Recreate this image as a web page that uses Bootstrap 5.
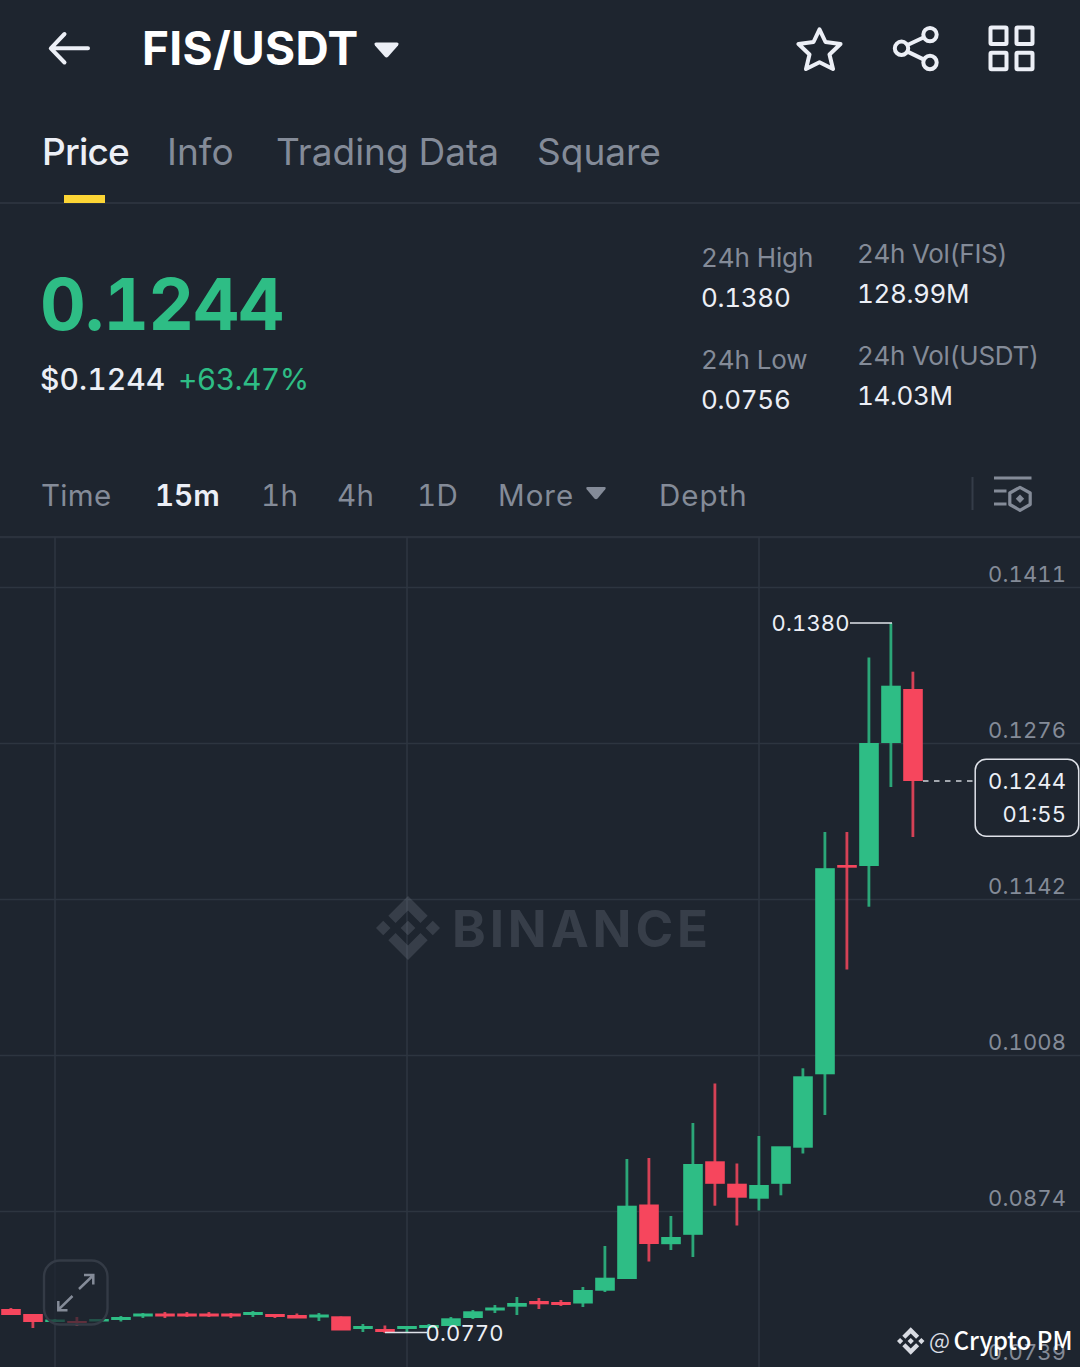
<!DOCTYPE html>
<html lang="en">
<head>
<meta charset="utf-8">
<meta name="viewport" content="width=device-width, initial-scale=1">
<title>FIS/USDT</title>
<link href="https://cdn.jsdelivr.net/npm/bootstrap@5.3.0/dist/css/bootstrap.min.css" rel="stylesheet">
<style>
:root{--ink:#eceff6;--dim:#848b98;--up:#2ebd85;--down:#f6465d;--line:#2b323d;--bg:#1e252f}
body{background:var(--bg);color:var(--ink);font-family:Inter,sans-serif;font-variant-numeric:tabular-nums;overflow:hidden;white-space:nowrap}
svg{display:block}
.app{width:1080px;height:1367px}
.topbar{height:96px;padding-left:48px;padding-right:44px}
.pair{width:215px;font-size:46px;font-weight:650;line-height:60px;letter-spacing:.3px;color:#fff;margin-left:51px}
.pair-caret{margin-left:17px;margin-top:3px}
.tools{gap:48px}
.tabs{height:108px;border-bottom:2px solid var(--line);padding-left:42px}
.tabs .nav-link{padding:0;font-size:37px;line-height:111px;height:106px;color:var(--dim);position:relative}
.tabs .nav-link.active{color:var(--ink);font-weight:500;letter-spacing:-.8px}
.tabs .nav-link.active::after{content:"";position:absolute;left:22px;bottom:-1px;width:41px;height:8px;background:#fcd535}
.w-price{width:125px}.w-info{width:109px}.w-data{width:261px}
.quote{height:252px;padding-left:40px}
.last{width:661px;padding-top:55px}
.last-price{font-size:71px;font-weight:650;line-height:90px;letter-spacing:-.9px;color:var(--up)}
.last-sub{font-size:30px;line-height:40px;margin-top:10px}
.last-usd{width:138px;font-weight:500;letter-spacing:.1px}
.last-pct{color:var(--up);letter-spacing:-.6px}
.stat-col{padding-top:34px;font-size:26px;line-height:40px}
.stat-col.vol{padding-top:30px;letter-spacing:-.4px}
.stat-left{width:156px}
.stat-col dt{font-weight:400;color:var(--dim);letter-spacing:-.1px}
.stat-col.vol dt{letter-spacing:-.3px}
.stat-col dd{margin:0 0 22px}
.stat-left dd{letter-spacing:-.3px}
.frames{height:80px;padding-left:41px;padding-right:48px;font-size:29.5px;line-height:79px;letter-spacing:.3px;color:var(--dim)}
.frames .on{color:var(--ink);font-weight:600;letter-spacing:0}
.f-time{width:114px}.f-15{width:106px}.f-1h{width:76px}.f-4h{width:80px}.f-1d{width:81px}.f-more{width:161px}
.frames .f-more,.frames .f-depth{letter-spacing:1px}
.chart text{font-family:Inter,sans-serif;font-size:22px}
.chart .axis{fill:var(--dim)}
.chart .tag{fill:var(--ink)}
.chart .brand{font-size:51px;font-weight:700}
.chart .credit{font-family:"Noto Sans CJK SC",sans-serif;font-size:25px;fill:#fff;font-weight:500}
.chart .credit-at{font-size:22px;font-weight:400;fill:#d8dbe2}
</style>
</head>
<body>
<main class="app d-flex flex-column">
  <header class="topbar d-flex align-items-center">
    <svg width="43" height="36" viewBox="48 30 43 36" fill="none" stroke="#eceff6" stroke-width="4" stroke-linecap="round" stroke-linejoin="round"><path d="M88 48.300H51M64.500 34L50.800 48.300L64.500 62.500"/></svg>
    <h1 class="pair mb-0">FIS/USDT</h1>
    <svg class="pair-caret" width="25" height="16" viewBox="0 0 25 16"><path d="M2 .5H23Q25.500 1 24 3.400L14.300 14.600Q12.500 16.300 10.700 14.600L1 3.400Q-.5 1 2 .5Z" fill="#eceff6"/></svg>
    <div class="tools d-flex align-items-center ms-auto">
      <svg width="48" height="48" viewBox="796 24 48 48" fill="none" stroke="#eceff6" stroke-width="4" stroke-linejoin="round"><path d="M819.500 29.300L825.500 42L840.500 44L829.500 54.500L833 69L819.500 62.300L806 69L809.500 54.500L798.500 44L813.500 42Z"/></svg>
      <svg width="48" height="48" viewBox="892 24 48 48" fill="none" stroke="#eceff6" stroke-width="4"><circle cx="901.500" cy="48.300" r="6.700"/><circle cx="930" cy="34.600" r="6.700"/><circle cx="930" cy="62.500" r="6.700"/><path d="M907.500 45L924 37.200M907.500 51.600L924 59.600"/></svg>
      <svg width="48" height="48" viewBox="988 24 48 48" fill="none" stroke="#eceff6" stroke-width="4"><rect x="990.500" y="27.500" width="16" height="16.500" rx="1"/><rect x="1016.500" y="27.500" width="16" height="16.500" rx="1"/><rect x="990.500" y="52.800" width="16" height="16.500" rx="1"/><rect x="1016.500" y="52.800" width="16" height="16.500" rx="1"/></svg>
    </div>
  </header>

  <nav class="tabs nav flex-nowrap">
    <a class="nav-link active w-price" href="#">Price</a>
    <a class="nav-link w-info" href="#">Info</a>
    <a class="nav-link w-data" href="#">Trading Data</a>
    <a class="nav-link" href="#">Square</a>
  </nav>

  <section class="quote d-flex">
    <div class="last">
      <div class="last-price">0.1244</div>
      <div class="last-sub d-flex"><span class="last-usd">$0.1244</span><span class="last-pct">+63.47%</span></div>
    </div>
    <dl class="stat-col stat-left mb-0">
      <dt>24h High</dt><dd>0.1380</dd>
      <dt>24h Low</dt><dd>0.0756</dd>
    </dl>
    <dl class="stat-col vol mb-0">
      <dt>24h Vol(FIS)</dt><dd>128.99M</dd>
      <dt>24h Vol(USDT)</dt><dd>14.03M</dd>
    </dl>
  </section>

  <div class="frames d-flex">
    <span class="f-time">Time</span><span class="on f-15">15m</span><span class="f-1h">1h</span><span class="f-4h">4h</span><span class="f-1d">1D</span>
    <span class="f-more d-flex">More<svg class="ms-2 mt-4" width="24" height="24" viewBox="583 480 24 24"><path d="M588.500 487H605.500Q607.500 487.300 606.300 489.200L598.600 498.500Q597 500 595.400 498.500L587.700 489.200Q586.500 487.300 588.500 487Z" fill="#848b98"/></svg></span>
    <span class="f-depth">Depth</span>
    <svg class="ms-auto align-self-start mt-3" width="62" height="44" viewBox="970 472 62 44" fill="none" stroke="#848b98" stroke-width="3.200"><path d="M972.500 477V510" stroke="#343c48" stroke-width="2"/><path d="M994 478H1031.500M994 491H1006.500M994 504H1006.500"/><path d="M1020 487.300L1030.200 493V504.500L1020 510.300L1009.800 504.500V493Z" stroke-linejoin="round"/><path d="M1020 494.500L1024.200 498.800L1020 503.100L1015.800 498.800Z" fill="#848b98" stroke="none"/></svg>
  </div>

  <svg class="chart" width="1080" height="831" viewBox="0 536 1080 831">
    <defs><path id="bnb" d="M38.730 53.200l24.590-24.580 24.600 24.600 14.300-14.310L63.320 0 24.420 38.900zM0 63.310l14.300-14.310 14.310 14.310-14.310 14.300zM38.730 73.410l24.590 24.590 24.600-24.600 14.310 14.290-38.900 38.910-38.910-38.880zM98 63.310l14.300-14.310 14.310 14.300-14.310 14.320zM77.830 63.300L63.320 48.780 48.800 63.300 63.320 77.830z"/></defs>
    <path d="M0 537H1080" stroke="#2b323d" stroke-width="2.500"/>
    <path d="M55 537V1367M407 537V1367M759 537V1367M0 587.500H1080M0 743.500H1080M0 899.500H1080M0 1055.500H1080M0 1211.500H1080" stroke="#2d3540" stroke-width="1.600" fill="none"/>
    <g fill="#848b98" fill-opacity=".25">
      <use href="#bnb" transform="translate(376 896) scale(.5055)"/>
      <text class="brand" x="452" y="946.500" textLength="256">BINANCE</text>
    </g>
    <g class="axis">
      <text x="988" y="582" textLength="78">0.1411</text><text x="988" y="738" textLength="78">0.1276</text><text x="988" y="894" textLength="78">0.1142</text><text x="988" y="1050" textLength="78">0.1008</text><text x="988" y="1206" textLength="78">0.0874</text><text x="988" y="1360" textLength="78">0.0739</text>
    </g>
    <g id="candles"></g>
    <g>
      <rect x="44" y="1260.500" width="63.500" height="64" rx="16" fill="#1e252f" fill-opacity=".7" stroke="#343b46" stroke-width="2.400"/>
      <path d="M79 1289L93 1275.500M84 1275H93.300V1284.500M72.500 1296L58.500 1309.700M58.300 1301V1310.200H67.500" fill="none" stroke="#848b98" stroke-width="2.500"/>
    </g>
    <path d="M850 623H892M385 1332.500H427" stroke="#dfe2e9" stroke-width="1.700"/>
    <path d="M923 781H973" stroke="#cfd3da" stroke-width="1.600" stroke-dasharray="5.500 5.500"/>
    <rect x="975.200" y="759.200" width="103.500" height="77" rx="11" fill="#1e252f" stroke="#dfe2e9" stroke-width="1.500"/>
    <g class="tag">
      <text x="771.500" y="631" textLength="78">0.1380</text>
      <text x="425.500" y="1341" textLength="78">0.0770</text>
      <text x="988" y="789" textLength="78">0.1244</text>
      <text x="1002.500" y="822" textLength="63.500">01:55</text>
    </g>
    <g fill="#d8dbe2"><use href="#bnb" transform="translate(897 1327.300) scale(.217)"/></g>
    <text x="929" y="1349" textLength="21" lengthAdjust="spacingAndGlyphs" class="credit credit-at">@</text>
    <text class="credit" x="953.500" y="1350" textLength="119" lengthAdjust="spacingAndGlyphs">Crypto PM</text>
  </svg>
</main>
<script src="https://cdn.jsdelivr.net/npm/bootstrap@5.3.0/dist/js/bootstrap.bundle.min.js"></script>
<script>
// One candle per 22px slot: [direction, body top, body bottom, wick top, wick bottom]
const candles = [
 ['d',1309,1315,1308,1315],['d',1314,1322,1314,1328],['u',1319.5,1322,1319,1322],['d',1321,1323,1317,1326],['u',1319,1321.5,1319,1321],
 ['u',1317,1320,1316,1321.5],['u',1313.5,1316.5,1313,1318],['d',1313.5,1316.5,1312,1318],['d',1313.5,1316.5,1312,1317],['d',1313.5,1316.5,1312,1317],
 ['d',1313.5,1316.5,1313,1318],['u',1312,1315,1311,1317],['d',1314,1317,1314,1318],['d',1315,1318.5,1313.5,1318],['u',1314.5,1317.5,1313,1321],
 ['d',1316.3,1330.5,1316.5,1330],['u',1326,1329,1324,1332],['d',1329,1332,1325.5,1333],['u',1326,1329,1326,1332],['u',1325,1328,1324,1328],
 ['u',1318.3,1326,1317,1326],['u',1311.3,1318,1310,1319],['u',1307.5,1310.5,1305,1313],['u',1303,1306.7,1297,1315],['d',1301,1304.3,1298,1309],
 ['d',1302,1305,1300,1306],['u',1290,1303.5,1287,1307],['u',1277.7,1290.7,1246,1292],['u',1205.7,1279,1159,1279],['d',1204.5,1244,1158,1261.5],
 ['u',1237,1244.2,1216,1250],['u',1164,1234.8,1123,1257],['d',1161.3,1183.8,1083.5,1205.7],['d',1183.7,1197.7,1163.5,1225.5],['u',1185,1198.7,1136,1210.5],
 ['u',1146.3,1183.8,1147,1195.3],['u',1076.3,1147.7,1068.3,1153.5],['u',868.2,1074.3,832,1115],['d',865,867.7,832,969.5],['u',743,866,657.5,906.7],
 ['u',685.7,743,623,787],['d',689,781,671.7,837]
];
document.getElementById('candles').innerHTML = candles.map(([dir, top, bottom, high, low], i) => {
  const x = 11 + i * 22;
  return `<g fill="${dir === 'u' ? '#2ebd85' : '#f6465d'}"><rect x="${x - 1.5}" y="${high}" width="2.8" height="${low - high}" opacity=".85"/><rect x="${x - 9.8}" y="${top}" width="19.6" height="${bottom - top}"/></g>`;
}).join('');
</script>
</body>
</html>
